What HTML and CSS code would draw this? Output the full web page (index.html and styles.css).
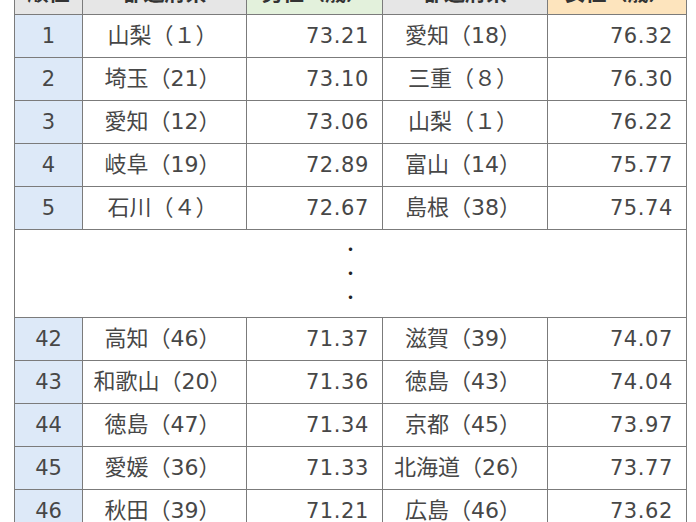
FILE: index.html
```html
<!DOCTYPE html>
<html lang="ja">
<head>
<meta charset="utf-8">
<link rel="stylesheet" href="styles.css">
</head>
<body>
<div class="page">
<table class="rank">
  <colgroup>
    <col class="c-rank"><col class="c-pref"><col class="c-val"><col class="c-pref2"><col class="c-val2">
  </colgroup>
  <thead>
    <tr>
      <th class="h-gray">順位</th>
      <th class="h-gray">都道府県</th>
      <th class="h-green">男性（歳）</th>
      <th class="h-gray">都道府県</th>
      <th class="h-orange">女性（歳）</th>
    </tr>
  </thead>
  <tbody>
    <tr><td class="no">1</td><td class="pref">山梨（１）</td><td class="val">73.21</td><td class="pref">愛知（18）</td><td class="val">76.32</td></tr>
    <tr><td class="no">2</td><td class="pref">埼玉（21）</td><td class="val">73.10</td><td class="pref">三重（８）</td><td class="val">76.30</td></tr>
    <tr><td class="no">3</td><td class="pref">愛知（12）</td><td class="val">73.06</td><td class="pref">山梨（１）</td><td class="val">76.22</td></tr>
    <tr><td class="no">4</td><td class="pref">岐阜（19）</td><td class="val">72.89</td><td class="pref">富山（14）</td><td class="val">75.77</td></tr>
    <tr><td class="no">5</td><td class="pref">石川（４）</td><td class="val">72.67</td><td class="pref">島根（38）</td><td class="val">75.74</td></tr>
    <tr class="gap"><td colspan="5"><div class="dots"><span>・</span><span>・</span><span>・</span></div></td></tr>
    <tr><td class="no">42</td><td class="pref">高知（46）</td><td class="val">71.37</td><td class="pref">滋賀（39）</td><td class="val">74.07</td></tr>
    <tr><td class="no">43</td><td class="pref">和歌山（20）</td><td class="val">71.36</td><td class="pref">徳島（43）</td><td class="val">74.04</td></tr>
    <tr><td class="no">44</td><td class="pref">徳島（47）</td><td class="val">71.34</td><td class="pref">京都（45）</td><td class="val">73.97</td></tr>
    <tr><td class="no">45</td><td class="pref">愛媛（36）</td><td class="val">71.33</td><td class="pref">北海道（26）</td><td class="val">73.77</td></tr>
    <tr><td class="no">46</td><td class="pref">秋田（39）</td><td class="val">71.21</td><td class="pref">広島（46）</td><td class="val">73.62</td></tr>
  </tbody>
</table>
</div>
</body>
</html>
```
FILE: styles.css
```css
html, body {
  margin: 0;
  padding: 0;
  background: #ffffff;
}
.page {
  padding-left: 14px;
  margin-top: -29px;
  font-family: "DejaVu Sans", "Noto Sans CJK JP", sans-serif;
  color: #474747;
}
.rank {
  border-collapse: collapse;
  table-layout: fixed;
  width: 672px;
}
.c-rank { width: 68px; }
.c-pref { width: 164px; }
.c-val { width: 136px; }
.c-pref2 { width: 165px; }
.c-val2 { width: 139px; }
.rank th, .rank td {
  border: 1px solid #7b7b7b;
  height: 42px;
  padding: 0;
  font-size: 21px;
  line-height: 24px;
  white-space: nowrap;
  overflow: hidden;
}
.rank th {
  font-weight: bold;
  color: #333333;
  text-align: center;
}
.h-gray { background: #e6e6e6; }
.h-green { background: #e3f1dc; }
.h-orange { background: #fde4bd; }
.no {
  background: #dde9f8;
  text-align: center;
}
.rank td.pref {
  text-align: center;
  font-size: 22px;
  padding-right: 4px;
}
.rank td.val {
  text-align: right;
  letter-spacing: 0.6px;
  padding-right: 13px;
}
.rank .gap td {
  height: 87px;
}
.dots {
  display: flex;
  flex-direction: column;
  align-items: center;
  font-size: 16px;
  line-height: 24px;
  color: #222222;
}
```
